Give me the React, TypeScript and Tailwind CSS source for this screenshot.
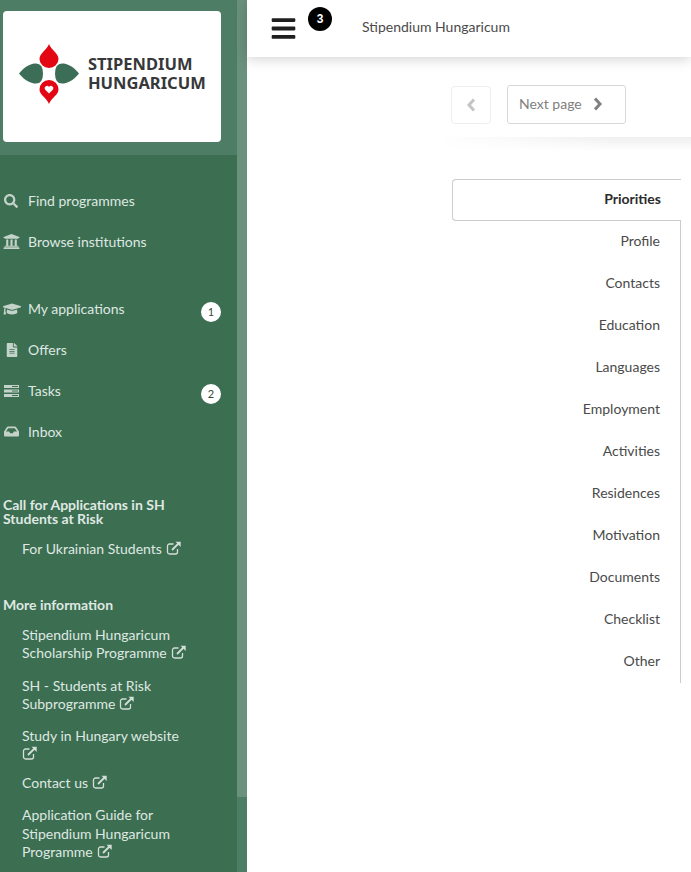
import type { ReactNode } from "react";
import { FaSearch, FaUniversity, FaGraduationCap, FaFileAlt, FaInbox, FaBars } from "react-icons/fa";

const TABS = ["Profile", "Contacts", "Education", "Languages", "Employment", "Activities", "Residences", "Motivation", "Documents", "Checklist", "Other"];

function ExtIcon({ className }: { className?: string }) {
  return (
    <svg viewBox="0 0 16 14" className={`inline-block w-[16px] h-[14px] align-[-1px] text-[#d3dfd8] ${className ?? "ml-[4px]"}`} fill="none" stroke="currentColor">
      <path d="M11.5 8v3a2 2 0 0 1-2 2h-6a2 2 0 0 1-2-2V5a2 2 0 0 1 2-2h4" strokeWidth="1.3" />
      <path d="M6 9l7-7" strokeWidth="1.8" />
      <path d="M9.5 0.8h5.2v5.2z" fill="currentColor" stroke="none" />
    </svg>
  );
}

function TasksIcon() {
  return (
    <svg viewBox="0 0 15 12" className="w-[15px] h-[12px] ml-[1px]" fill="currentColor">
      <path d="M0 0h15v3H0zM0 4.500h15v3H0zM0 9h15v3H0z" />
      <path d="M8 1h6v1H8zM8 5.500h6v1H8zM8 10h6v1H8z" fill="#3c6e51" />
    </svg>
  );
}

function Chevron({ dir, className }: { dir: "left" | "right"; className?: string }) {
  return (
    <svg viewBox="0 0 10 14" className={`w-[10px] h-[14px] ${className ?? ""}`} fill="none" stroke="currentColor" strokeWidth="3">
      <path d={dir === "left" ? "M8 1.500L3 7l5 5.500" : "M2 1.500L7 7l-5 5.500"} />
    </svg>
  );
}

function NavItem({ icon, label, badge }: { icon: ReactNode; label: string; badge?: string }) {
  return (
    <div className="relative flex items-center h-[41px] pl-[3px]">
      <span className="w-[25px] flex justify-start text-[#c3d3ca]">{icon}</span>
      <span className="text-[14px] text-[#dfe8e2] leading-none">{label}</span>
      {badge && (
        <span className="absolute left-[201px] top-[14px] w-[20px] h-[20px] rounded-full bg-white text-[#2f4a3a] text-[11px] flex items-center justify-center">
          {badge}
        </span>
      )}
    </div>
  );
}

function LinkItem({ children, className }: { children: ReactNode; className?: string }) {
  return <div className={`pl-[22px] pr-[47px] text-[14px] leading-[18.5px] text-[#dfe8e2] ${className ?? ""}`}>{children}</div>;
}

function Logo() {
  return (
    <div className="ml-[3px] mt-[11px] w-[218px] h-[131px] bg-white rounded-[4px] flex items-center pl-[16px] pb-[6px]">
      <svg viewBox="0 0 60 60" className="w-[60px] h-[60px] shrink-0">
        <path d="M30 0 C32 6 39.500 9 39.500 15 A9.500 9 0 0 1 20.500 15 C20.500 9 28 6 30 0Z" fill="#e30613" />
        <path d="M0 29.500 C6 22 12 19.500 17 19.500 Q24 19.500 24 29.500 Q24 39.500 17 39.500 C12 39.500 6 37 0 29.500Z" fill="#3c6e57" />
        <path d="M60 29.500 C54 22 48 19.500 43 19.500 Q36 19.500 36 29.500 Q36 39.500 43 39.500 C48 39.500 54 37 60 29.500Z" fill="#3c6e57" />
        <path d="M30 60 C28 54 20.500 51 20.500 45.500 A9.500 9.500 0 0 1 39.500 45.500 C39.500 51 32 54 30 60Z" fill="#e30613" />
        <path d="M30 49.500 L26 45.500 A2.300 2.300 0 0 1 30 43 A2.300 2.300 0 0 1 34 45.500Z" fill="#fff" />
      </svg>
      <div className="ml-[9px] font-['Noto_Sans',sans-serif] font-bold text-[16.5px] leading-[18.5px] text-[#37383a]">
        STIPENDIUM
        <br />
        HUNGARICUM
      </div>
    </div>
  );
}

export default function App() {
  return (
    <div className="flex h-[872px] w-[691px] overflow-hidden bg-white font-['Lato',sans-serif] [font-variant-ligatures:common-ligatures]">
      <aside className="w-[237px] shrink-0 bg-[#3c6e51] flex flex-col">
        <div className="h-[155px] shrink-0 bg-[#4e7d65] overflow-hidden">
          <Logo />
        </div>
        <nav className="pt-[25px]">
          <NavItem icon={<FaSearch size={14} className="ml-[1px]" />} label="Find programmes" />
          <NavItem icon={<FaUniversity size={17} />} label="Browse institutions" />
          <div className="mt-[26px]">
            <NavItem icon={<FaGraduationCap size={18} />} label="My applications" badge="1" />
            <NavItem icon={<FaFileAlt size={14} className="ml-[2px]" />} label="Offers" />
            <NavItem icon={<TasksIcon />} label="Tasks" badge="2" />
            <NavItem icon={<FaInbox size={15} className="ml-[1px]" />} label="Inbox" />
          </div>
          <div className="mt-[46px] pl-[3px] pr-[47px] text-[14px] font-bold leading-[14px] text-[#dfe8e2]">
            Call for Applications in SH Students at Risk
          </div>
          <div className="mt-[14px]">
            <LinkItem>For Ukrainian Students<ExtIcon /></LinkItem>
          </div>
          <div className="mt-[37px] pl-[3px] text-[14px] font-bold leading-[18px] text-[#dfe8e2]">More information</div>
          <div className="mt-[12px] flex flex-col gap-[13px]">
            <LinkItem>Stipendium Hungaricum Scholarship Programme<ExtIcon /></LinkItem>
            <LinkItem className="mt-[1px]">SH - Students at Risk Subprogramme<ExtIcon /></LinkItem>
            <LinkItem>Study in Hungary website <ExtIcon className="ml-0" /></LinkItem>
            <LinkItem className="-mt-[3px]">Contact us<ExtIcon /></LinkItem>
            <LinkItem className="mt-[1px]">Application Guide for Stipendium Hungaricum Programme<ExtIcon /></LinkItem>
          </div>
        </nav>
      </aside>

      {/* sidebar scrollbar */}
      <div className="w-[10px] shrink-0 bg-[#4e7d65]">
        <div className="h-[797px] bg-[#6a917c]" />
      </div>

      <main className="flex-1 min-w-0">
        <header className="relative h-[57px] bg-white shadow-[0_2px_12px_rgba(0,0,0,0.18)] flex items-center">
          <FaBars size={27} className="ml-[23px] -mt-[1px] text-[#1f1f1f]" />
          <span className="absolute left-[61px] top-[7px] w-[24px] h-[24px] rounded-full bg-black text-white text-[12px] font-bold font-['Liberation_Sans',sans-serif] flex items-center justify-center">
            3
          </span>
          <span className="ml-[65px] -mt-[4px] text-[14px] text-[#4a4a4a]">Stipendium Hungaricum</span>
        </header>

        <div className="h-[80px] pl-[204px] pt-[28px] flex items-start gap-[16px]">
          <button className="mt-[1px] w-[40px] h-[38px] border border-[#eeeeee] rounded-[4px] flex items-center justify-center text-[#c4c4c4]">
            <Chevron dir="left" />
          </button>
          <button className="w-[119px] h-[39px] border border-[#d8d8d8] rounded-[3px] flex items-center pl-[11px] pb-[2px] text-[14px] text-[#808080]">
            Next page
            <Chevron dir="right" className="ml-[11px] text-[#808080]" />
          </button>
        </div>

        {/* fading shadow under the pager */}
        <div className="h-[14px] ml-[190px] bg-gradient-to-b from-[#efefef] to-white [mask-image:linear-gradient(to_right,transparent,black_70%)]" />

        <div className="mt-[28px] ml-[205px] w-[229px]">
          <div className="h-[42px] border border-[#cccccc] border-r-0 rounded-l-[4px] flex items-center justify-end pr-[20px] pb-[3px] text-[14px] font-bold text-[#2b2b2b]">
            Priorities
          </div>
          <div className="border-r border-[#cccccc]">
            {TABS.map((t) => (
              <div key={t} className="h-[42px] flex items-center justify-end pr-[20px] pb-[3px] text-[14px] text-[#4a4a4a]">
                {t}
              </div>
            ))}
          </div>
        </div>
      </main>
    </div>
  );
}
